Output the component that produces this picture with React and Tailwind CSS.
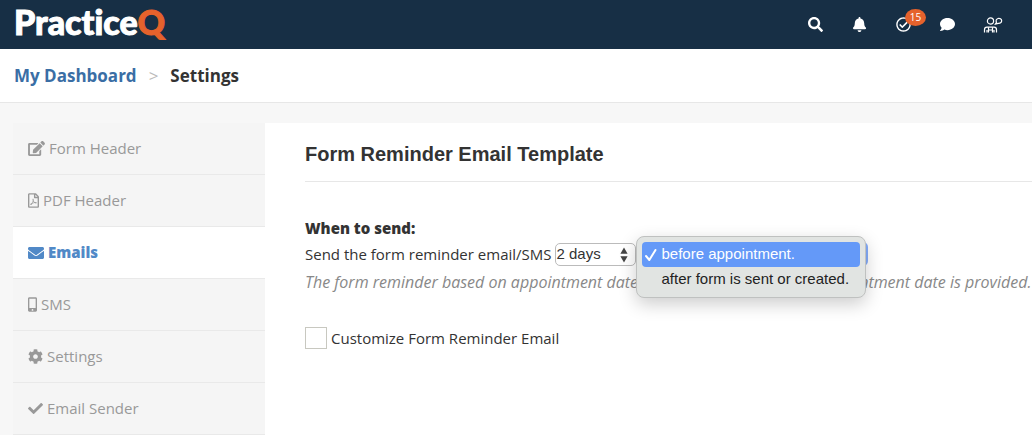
import React, { useState } from 'react'
import clsx from 'clsx'
import {
  FaBell,
  FaCheck,
  FaCog,
  FaComment,
  FaEdit,
  FaEnvelope,
  FaMobileAlt,
  FaRegCheckCircle,
  FaRegFilePdf,
  FaSearch,
} from 'react-icons/fa'

const menuItems = [
  { id: 'form-header', label: 'Form Header', icon: FaEdit, iconClass: 'h-[15px] w-[17px]' },
  { id: 'pdf-header', label: 'PDF Header', icon: FaRegFilePdf, iconClass: 'h-[15px] w-[11px]' },
  { id: 'emails', label: 'Emails', icon: FaEnvelope, iconClass: 'h-4 w-4' },
  { id: 'sms', label: 'SMS', icon: FaMobileAlt, iconClass: 'h-[15px] w-[9px]' },
  { id: 'settings', label: 'Settings', icon: FaCog, iconClass: 'h-[15px] w-[15px]' },
  { id: 'email-sender', label: 'Email Sender', icon: FaCheck, iconClass: 'h-[15px] w-[15px]' },
]

const sendOptions = ['before appointment.', 'after form is sent or created.']

function CommunityIcon() {
  return (
    <svg viewBox="0 0 20 16" className="h-4 w-5" fill="none" stroke="currentColor" strokeWidth="1.2">
      <circle cx="7.5" cy="4" r="3.1" />
      <path d="M12.4 7l1.1-1.8a2.8 2.5 0 1 1 1.7 1.1z" />
      <path d="M1.5 15.5v-2.8q0-2.6 2.4-2.6h7.2q2.4 0 2.4 2.6v2.8" />
      <path d="M4 15.5v-2.4M11 15.5v-2.4M5.5 10.2v5.3M9.5 10.2v5.3M5.5 13h4" />
    </svg>
  )
}

function Header() {
  return (
    <header className="flex h-[49px] items-center justify-between bg-[#172f45] pl-[14px] pr-[29px] text-white">
      <a
        href="#home"
        className="pb-[6px] font-['Lato','Open_Sans',sans-serif] text-[34px] font-black leading-10 [-webkit-text-stroke:1px_currentColor] [font-variant-ligatures:none]"
      >
        Practice<span className="text-[#e5622c]">Q</span>
      </a>
      <nav className="flex items-center gap-7">
        <button type="button" aria-label="Search" className="flex w-4 justify-center">
          <FaSearch className="h-[15px] w-[15px]" />
        </button>
        <button type="button" aria-label="Notifications" className="flex w-4 justify-center">
          <FaBell className="h-[15px] w-[15px]" />
        </button>
        <button type="button" aria-label="Tasks" className="relative flex w-4 justify-center">
          <FaRegCheckCircle className="h-[15px] w-[15px]" />
          <span className="absolute -top-2 left-[10px] flex h-[17px] w-[21px] items-center justify-center rounded-[50%] bg-[#e5622c] text-[10px]">
            15
          </span>
        </button>
        <button type="button" aria-label="Messages" className="flex w-4 justify-center">
          <FaComment className="h-[15px] w-[15px]" />
        </button>
        <button type="button" aria-label="Community" className="flex w-5 justify-center">
          <CommunityIcon />
        </button>
      </nav>
    </header>
  )
}

function Sidebar({ active, onSelect }) {
  return (
    <nav className="w-[252px] shrink-0 bg-[#f5f5f5]">
      {menuItems.map(({ id, label, icon: Icon, iconClass }) => (
        <a
          key={id}
          href={`#${id}`}
          onClick={() => onSelect(id)}
          className={clsx(
            'flex h-[52px] items-center gap-1 border-b border-[#e9e9e9] pl-[15px] text-[15px]',
            active === id ? 'bg-white font-extrabold text-[#5189c7]' : 'text-[#999]'
          )}
        >
          <Icon className={iconClass} />
          {label}
        </a>
      ))}
    </nav>
  )
}

function DaysSelect() {
  return (
    <span className="relative flex">
      <select
        aria-label="Number of days"
        defaultValue="2"
        className="h-[23px] w-[81px] appearance-none rounded-[5px] border border-[#bbb] bg-white font-['Liberation_Sans',Arial,sans-serif] text-[15px] leading-5"
      >
        <option value="1">1 day</option>
        <option value="2">2 days</option>
        <option value="3">3 days</option>
      </select>
      <svg viewBox="0 0 8 16" className="pointer-events-none absolute right-2 top-1 h-4 w-2" fill="#444">
        <path d="M4 0.5l3.6 6.3H0.4zM4 15.5l3.6-6.3H0.4z" />
      </svg>
    </span>
  )
}

function TimingSelect() {
  const [value, setValue] = useState(sendOptions[0])
  const [open, setOpen] = useState(true)

  const choose = (option) => {
    setValue(option)
    setOpen(false)
  }

  return (
    <div className="relative flex font-['Liberation_Sans',Arial,sans-serif]">
      <button
        type="button"
        aria-haspopup="listbox"
        aria-expanded={open}
        aria-label="When to send"
        onClick={() => setOpen(!open)}
        className="h-6 w-[232px] rounded-[5px] bg-[#85adfb] px-2 text-left text-sm text-white"
      >
        {!open && value}
      </button>
      {open && (
        <ul
          role="listbox"
          className="absolute -top-[6px] left-0 z-10 w-[230px] rounded-lg border border-[#bfc1c0] bg-[#e1e4e2] p-[5px] text-[15px] text-[#222] shadow-[0_6px_18px_rgba(0,0,0,0.2)]"
        >
          {sendOptions.map((option) => (
            <li
              key={option}
              role="option"
              aria-selected={option === value}
              onClick={() => choose(option)}
              className={clsx(
                'flex h-[25px] items-center gap-1 whitespace-nowrap rounded pl-[3px]',
                option === value && 'bg-[#6499f8] text-white'
              )}
            >
              <svg viewBox="0 0 12 12" className="h-3 w-3" fill="none" stroke="currentColor" strokeWidth="2">
                {option === value && <path d="M1 7l3.3 4L10.5 1" strokeLinecap="round" />}
              </svg>
              {option}
            </li>
          ))}
        </ul>
      )}
    </div>
  )
}

export default function App() {
  const [active, setActive] = useState('emails')

  return (
    <div className="min-h-screen overflow-x-hidden bg-[#f7f7f7] font-['Open_Sans','Noto_Sans',sans-serif] text-[#333]">
      <Header />
      <div className="flex h-[54px] items-center gap-3 border-b border-[#e7e7e7] bg-white px-[14px] text-[17px] font-bold">
        <a href="#dashboard" className="text-[#3a6ea5]">
          My Dashboard
        </a>
        <span className="font-normal text-[#bbb]">&gt;</span>
        <span>Settings</span>
      </div>

      <div className="flex items-stretch pl-[13px] pt-5">
        <Sidebar active={active} onSelect={setActive} />
        <main className="min-w-0 flex-1 bg-white pl-10 text-[15px]">
          <h1 className="border-b border-[#e7e7e7] pb-[14px] pt-[18px] font-['Liberation_Sans',Arial,sans-serif] text-xl font-bold leading-[26px]">
            Form Reminder Email Template
          </h1>

          <section className="pt-9">
            <h2 className="font-extrabold leading-5">When to send:</h2>
            <div className="flex h-8 items-center whitespace-nowrap">
              <span className="mr-1">Send the form reminder email/SMS</span>
              <DaysSelect />
              <TimingSelect />
            </div>
            <p className="whitespace-nowrap text-base italic leading-6 text-[#888]">
              The form reminder based on appointment date will be sent only once an appointment date is provided.
            </p>
          </section>

          <label className="mt-[33px] flex items-center gap-1">
            <input type="checkbox" className="h-[22px] w-[22px] appearance-none border border-[#c8c8c0] bg-white checked:bg-[#5189c7]" />
            Customize Form Reminder Email
          </label>
        </main>
      </div>
    </div>
  )
}
